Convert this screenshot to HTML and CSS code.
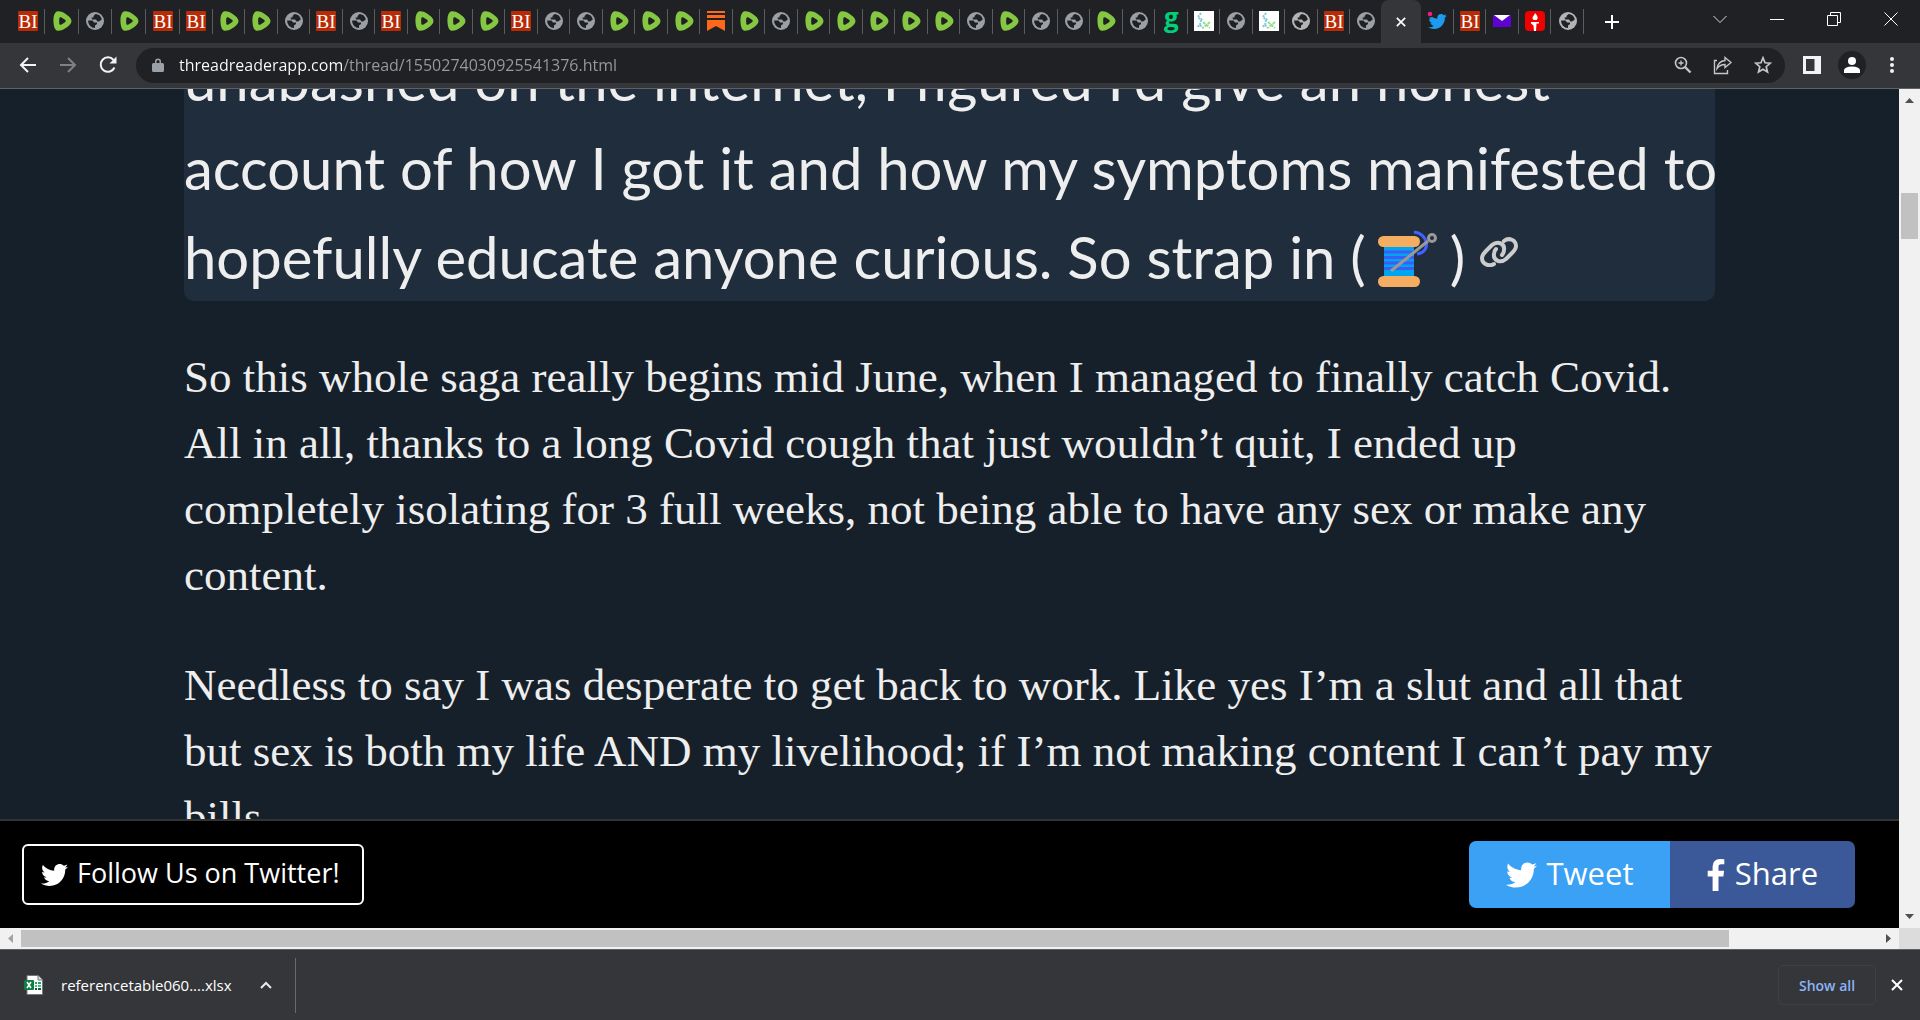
FILE: index.html
```html
<!DOCTYPE html>
<html lang="en">
<head>
<meta charset="utf-8">
<title>Thread Reader</title>
<link rel="stylesheet" href="styles.css">
</head>
<body>
<svg class="defs" aria-hidden="true">
  <symbol id="bi" viewBox="0 0 20 20"><rect width="20" height="20" rx="1" fill="#b92b06"/><text x="10" y="17" text-anchor="middle" font-family="Liberation Serif, serif" font-size="19" fill="#fff">BI</text></symbol>
  <symbol id="ru" viewBox="0 0 20 20"><path d="M3.500 1.500C5-.5 9-.2 13 2.500c4 2.500 6.500 5 6.500 7.500s-2.500 5-6.500 7.500-8 3-9.500 1C1 15.500.5 4.500 3.500 1.500z" fill="#85c742"/><path d="M7.300 7.300c.2-1.200 1.200-1.400 2.200-.8l3.500 2.300c1 .8 1 1.600 0 2.400l-3.500 2.300c-1 .6-2 .4-2.200-.8-.2-1.800-.2-3.600 0-5.400z" fill="#202124"/></symbol>
  <symbol id="gl" viewBox="0 0 18 18"><circle cx="9" cy="9" r="9" fill="currentColor"/><path d="M9.500 2 7.500 4v1.500H5.500l.5 2h4l1.500 2h1.500L15.800 7.500A7 7 0 0 0 9.500 2zM2.100 8.500A7 7 0 0 0 9 16v-2.500l2-1.500V10.500H8L6.500 8.500z" fill="#202124"/></symbol>
  <symbol id="chem" viewBox="0 0 20 20"><rect width="20" height="20" fill="#fff"/><path d="m7 2-3 4 3 3 2-2m-2 2-1 5-3 2m3-2 3 3" fill="none" stroke="#7ccbd8" stroke-width="2" stroke-dasharray="2 1"/><path d="m9 11 7 6m0-6-7 6" stroke="#93dd8b" stroke-width="2" stroke-dasharray="3 1"/></symbol>
  <symbol id="sub" viewBox="0 0 18 20"><path d="M0 0h18v2H0zM0 4h18v3H0zM0 9h18v11l-9-5-9 5z" fill="#ff6719"/></symbol>
  <symbol id="bird" viewBox="0 48 512 416"><path fill="currentColor" d="M459.370 151.716c.325 4.548.325 9.097.325 13.645 0 138.720-105.583 298.558-298.558 298.558-59.452 0-114.680-17.219-161.137-47.106 8.447.974 16.568 1.299 25.340 1.299 49.055 0 94.213-16.568 130.274-44.832-46.132-.975-84.792-31.188-98.112-72.772 6.498.974 12.995 1.624 19.818 1.624 9.421 0 18.843-1.300 27.614-3.573-48.081-9.747-84.143-51.980-84.143-102.985v-1.299c13.969 7.797 30.214 12.670 47.431 13.319-28.264-18.843-46.781-51.005-46.781-87.391 0-19.492 5.197-37.360 14.294-52.954 51.655 63.675 129.300 105.258 216.365 109.807-1.624-7.797-2.599-15.918-2.599-24.040 0-57.828 46.782-104.934 104.934-104.934 30.213 0 57.502 12.670 76.670 33.137 23.715-4.548 46.456-13.320 66.599-25.340-7.798 24.366-24.366 44.833-46.132 57.827 21.117-2.273 41.584-8.122 60.426-16.243-14.292 20.791-32.161 39.308-52.628 54.253z"/></symbol>
  <symbol id="x" viewBox="0 0 12 12"><path d="m1 1 10 10M11 1 1 11" stroke="currentColor" stroke-width="2" fill="none"/></symbol>
</svg>

<header class="browser">
  <nav class="tabs" aria-label="Tabs">
    <div class="group group-first">
      <button class="tab"><svg class="i20"><use href="#bi"/></svg></button>
      <button class="tab"><svg class="i20"><use href="#ru"/></svg></button>
      <button class="tab"><svg class="i18"><use href="#gl"/></svg></button>
      <button class="tab"><svg class="i20"><use href="#ru"/></svg></button>
      <button class="tab"><svg class="i20"><use href="#bi"/></svg></button>
    </div>
    <div class="group group-main">
      <button class="tab"><svg class="i20"><use href="#bi"/></svg></button>
      <button class="tab"><svg class="i20"><use href="#ru"/></svg></button>
      <button class="tab"><svg class="i20"><use href="#ru"/></svg></button>
      <button class="tab"><svg class="i18"><use href="#gl"/></svg></button>
      <button class="tab"><svg class="i20"><use href="#bi"/></svg></button>
      <button class="tab"><svg class="i18"><use href="#gl"/></svg></button>
      <button class="tab"><svg class="i20"><use href="#bi"/></svg></button>
      <button class="tab"><svg class="i20"><use href="#ru"/></svg></button>
      <button class="tab"><svg class="i20"><use href="#ru"/></svg></button>
      <button class="tab"><svg class="i20"><use href="#ru"/></svg></button>
      <button class="tab"><svg class="i20"><use href="#bi"/></svg></button>
      <button class="tab"><svg class="i18"><use href="#gl"/></svg></button>
      <button class="tab"><svg class="i18"><use href="#gl"/></svg></button>
      <button class="tab"><svg class="i20"><use href="#ru"/></svg></button>
      <button class="tab"><svg class="i20"><use href="#ru"/></svg></button>
      <button class="tab"><svg class="i20"><use href="#ru"/></svg></button>
      <button class="tab"><svg class="i20"><use href="#sub"/></svg></button>
      <button class="tab"><svg class="i20"><use href="#ru"/></svg></button>
      <button class="tab"><svg class="i18"><use href="#gl"/></svg></button>
      <button class="tab"><svg class="i20"><use href="#ru"/></svg></button>
      <button class="tab"><svg class="i20"><use href="#ru"/></svg></button>
      <button class="tab"><svg class="i20"><use href="#ru"/></svg></button>
      <button class="tab"><svg class="i20"><use href="#ru"/></svg></button>
      <button class="tab"><svg class="i20"><use href="#ru"/></svg></button>
      <button class="tab"><svg class="i18"><use href="#gl"/></svg></button>
      <button class="tab"><svg class="i20"><use href="#ru"/></svg></button>
      <button class="tab"><svg class="i18"><use href="#gl"/></svg></button>
      <button class="tab"><svg class="i18"><use href="#gl"/></svg></button>
      <button class="tab"><svg class="i20"><use href="#ru"/></svg></button>
      <button class="tab"><svg class="i18"><use href="#gl"/></svg></button>
      <button class="tab"><span class="gab">g</span></button>
      <button class="tab"><svg class="i20"><use href="#chem"/></svg></button>
      <button class="tab"><svg class="i18"><use href="#gl"/></svg></button>
      <button class="tab"><svg class="i20"><use href="#chem"/></svg></button>
      <button class="tab"><svg class="i18 pale"><use href="#gl"/></svg></button>
      <button class="tab"><svg class="i20"><use href="#bi"/></svg></button>
    </div>
    <button class="tab tab-edge"><svg class="i18"><use href="#gl"/></svg></button>
    <button class="tab tab-active" aria-label="Close tab"><svg class="i10"><use href="#x"/></svg></button>
    <div class="group group-last">
      <button class="tab"><svg class="i20" viewBox="0 0 20 20"><svg x="1" y="3" width="19" height="15" class="sky"><use href="#bird"/></svg><circle cx="3" cy="3" r="3.500" fill="#202124"/><circle cx="3" cy="3" r="2.300" fill="#f91880"/></svg></button>
      <button class="tab"><svg class="i20"><use href="#bi"/></svg></button>
      <button class="tab"><svg class="i18" viewBox="0 0 18 18"><path d="M0 3h18v12H0z" fill="#5f01d1"/><path d="M1 3h16l-8 6z" fill="#fff"/></svg></button>
      <button class="tab"><svg class="i20" viewBox="0 0 20 20"><rect width="20" height="20" rx="4" fill="#f20000"/><path d="M10 2c2 2 3 4 2.500 5.500-.5 1-1 1.500-1 1.500h-3s-1-.7-1-2C7.500 5 9.500 4.500 10 2zM6 11h8v1.500h-2.500L11 20H9l-.5-5.500L6 12.500z" fill="#fff"/></svg></button>
      <button class="tab"><svg class="i18 pale"><use href="#gl"/></svg></button>
    </div>
    <button class="newtab" aria-label="New tab"><svg class="i16" viewBox="0 0 16 16"><path d="M8 1v14M1 8h14" stroke="#fff" stroke-width="2"/></svg></button>
    <div class="window-controls">
      <button aria-label="Search tabs"><svg class="i14" viewBox="0 0 14 14"><path d="m.5 4 6.500 6.500L13.500 4" fill="none" stroke="#ddd"/></svg></button>
      <button aria-label="Minimize"><svg class="i14" viewBox="0 0 14 14"><path d="M0 7.500h14" stroke="#fff"/></svg></button>
      <button aria-label="Restore"><svg class="i14" viewBox="0 0 14 14"><path d="M.5 3.500h10v10H.5zM3.500 3V.5h10v10H11" fill="none" stroke="#fff"/></svg></button>
      <button aria-label="Close"><svg class="i14" viewBox="0 0 14 14"><path d="m.5.5 13 13m0-13-13 13" stroke="#fff"/></svg></button>
    </div>
  </nav>

  <div class="toolbar">
    <div class="nav-buttons">
      <button aria-label="Back"><svg class="i18" viewBox="0 0 18 18"><path d="M17 9H2m7-7L2 9l7 7" fill="none" stroke="#f1f3f4" stroke-width="2"/></svg></button>
      <button aria-label="Forward"><svg class="i18" viewBox="0 0 18 18"><path d="M1 9h15M9 2l7 7-7 7" fill="none" stroke="#808185" stroke-width="2"/></svg></button>
      <button aria-label="Reload"><svg class="i18" viewBox="0 0 18 18"><path d="M15.500 11.500A7.200 7.200 0 1 1 14.500 4" fill="none" stroke="#f1f3f4" stroke-width="2"/><path d="M17.500.5v7h-7z" fill="#f1f3f4"/></svg></button>
    </div>
    <form class="omnibox">
      <svg class="i14" viewBox="0 0 12 14"><path d="M1.500 5H3V3.500a3 3 0 0 1 6 0V5h1.500Q12 5 12 6.500v6q0 1.500-1.500 1.500h-9Q0 14 0 12.500v-6Q0 5 1.500 5zm3 0h3V3.500a1.500 1.500 0 0 0-3 0z" fill="#9aa0a6"/></svg>
      <input class="url" type="text" aria-label="Address" value="threadreaderapp.com/thread/1550274030925541376.html">
      <button type="button" aria-label="Zoom"><svg class="i18" viewBox="0 0 18 18"><circle cx="7" cy="7" r="5.500" fill="none" stroke="#c4c7c5" stroke-width="1.600"/><path d="M11 11l5.500 5.500" stroke="#c4c7c5" stroke-width="2.400"/><path d="M7 4.500v5M4.500 7h5" stroke="#c4c7c5" stroke-width="1.300"/></svg></button>
      <button type="button" aria-label="Share"><svg class="i20" viewBox="0 0 20 20"><path d="M4 5.500H1.500v13h13V15M12 2.500l6 5-6 5v-3c-4 0-6 1.500-8 4 .7-4.500 3.500-7.500 8-8z" fill="none" stroke="#c4c7c5" stroke-width="1.400"/></svg></button>
      <button type="button" aria-label="Bookmark"><svg class="i18" viewBox="0 0 18 18"><path d="m9 1.800 2 5 5.300.4-4.100 3.500 1.300 5.300L9 13.200 4.500 16l1.300-5.300-4.100-3.500L7 6.800z" fill="none" stroke="#c4c7c5" stroke-width="1.700"/></svg></button>
    </form>
    <div class="tool-buttons">
      <button aria-label="Side panel"><svg class="i18" viewBox="0 0 18 18"><path d="M0 0h18v18H0zM3 3v12h8.500V3z" fill="#f1f3f4" fill-rule="evenodd"/></svg></button>
      <button class="profile" aria-label="Profile"><svg class="i16" viewBox="0 0 16 16"><circle cx="8" cy="4" r="4" fill="#fff"/><path d="M0 16v-3q1-3.500 8-3.500t8 3.500v3z" fill="#fff"/></svg></button>
      <button aria-label="Menu"><svg class="i18" viewBox="0 0 18 18"><g fill="#f1f3f4"><circle cx="9" cy="3" r="2"/><circle cx="9" cy="9" r="2"/><circle cx="9" cy="15" r="2"/></g></svg></button>
    </div>
  </div>
</header>

<div class="viewport">
  <div class="page">
    <main class="thread">
      <article class="scrolled">
        <p class="lead">unabashed on the internet, I figured I’d give an honest<br>account of how I got it and how my symptoms manifested to<br>hopefully educate anyone curious. So strap in (<svg class="thread-emoji" viewBox="0 0 60 58" role="img" aria-label="thread"><path d="M6 14h30v34H6z" fill="#00a5f0"/><path d="M6 22h30M6 27.500h30M6 33h30M6 38.500h30" stroke="#3c5cf5" stroke-width="3"/><rect y="6" width="42" height="11" rx="5.500" fill="#f5ae61"/><rect y="46" width="42" height="11" rx="5.500" fill="#f5ae61"/><path d="M36 2c14 1 18 20 3 22" fill="none" stroke="#4162ff" stroke-width="3"/><path d="M13 41 50 11" stroke="#999" stroke-width="3"/><circle cx="54" cy="8" r="3.500" fill="none" stroke="#999" stroke-width="3"/></svg>) <a class="permalink" href="#" aria-label="Permalink"><svg viewBox="0 0 38 30"><g fill="none" stroke="#ccc" stroke-width="4" stroke-linecap="round"><path d="M14 27c-5 3-12 0-12-6 0-3 2-5 4-7l6-6c6-5 13-1 12 5 0 3-1 4-2 5"/><path d="M24 4c5-4 12-1 12 5 0 3-2 5-4 7l-6 6c-6 5-13 1-12-5 0-3 1-4 2-5"/></g></svg></a></p>
        <p class="body">So this whole saga really begins mid June, when I managed to finally catch Covid.<br>All in all, thanks to a long Covid cough that just wouldn’t quit, I ended up<br>completely isolating for 3 full weeks, not being able to have any sex or make any<br>content.</p>
        <p class="body">Needless to say I was desperate to get back to work. Like yes I’m a slut and all that<br>but sex is both my life AND my livelihood; if I’m not making content I can’t pay my<br>bills.</p>
      </article>
    </main>
    <footer class="actions">
      <a class="follow" href="#"><svg class="bird-small"><use href="#bird"/></svg><span class="label">Follow Us on Twitter!</span></a>
      <div class="share-group">
        <a class="share tweet" href="#"><svg class="bird-big"><use href="#bird"/></svg><span class="label">Tweet</span></a>
        <a class="share facebook" href="#"><svg class="fb" viewBox="479 0 864 1664"><path fill="#fff" d="M1343 12v264h-157q-86 0-116 36t-30 108v189h293l-39 296h-254v759h-306v-759h-255v-296h255v-218q0-186 104-288.500t277-102.500q147 0 228 12z"/></svg><span class="label">Share</span></a>
      </div>
    </footer>
  </div>
  <div class="vscroll">
    <svg class="arrow" viewBox="0 0 9 5"><path d="M0 5 4.500 0 9 5z" fill="#505050"/></svg>
    <div class="vthumb"></div>
    <svg class="arrow arrow-end" viewBox="0 0 9 5"><path d="M0 0h9L4.500 5z" fill="#505050"/></svg>
  </div>
</div>
<div class="hscroll">
  <div class="htrack">
    <svg class="harrow" viewBox="0 0 5 9"><path d="M5 0v9L0 4.500z" fill="#a3a3a3"/></svg>
    <div class="hrail"><div class="hthumb"></div></div>
    <svg class="harrow" viewBox="0 0 5 9"><path d="M0 0v9l5-4.500z" fill="#505050"/></svg>
  </div>
</div>

<footer class="downloads">
  <button class="file">
    <svg class="i20" viewBox="0 0 20 20"><path d="M3 .5h11l4.500 4.500v14.500H3z" fill="#fff" stroke="#777"/><path d="M14 .5V5h4.500" fill="#ddd" stroke="#777"/><path d="M11 7h2v2h-2zm3 0h3v2h-3z" fill="#21a366"/><path d="M11 10h2v2h-2zm3 0h3v2h-3z" fill="#33c481"/><path d="M11 13h2v2h-2zm3 0h3v2h-3z" fill="#185c37"/><rect y="5" width="10" height="10" rx="1" fill="#107c41"/><path d="m3 7 4 6m0-6-4 6" stroke="#fff" stroke-width="1.500"/></svg>
    <span>referencetable060....xlsx</span>
  </button>
  <button class="more" aria-label="File options"><svg class="i12" viewBox="0 0 12 12"><path d="m1 9 5-5 5 5" fill="none" stroke="#e8eaed" stroke-width="2"/></svg></button>
  <button class="show-all">Show all</button>
  <button class="dismiss" aria-label="Close"><svg class="i12"><use href="#x"/></svg></button>
</footer>
</body>
</html>
```
FILE: styles.css
```css
* { box-sizing: border-box; }
html, body { height: 100%; }
body {
  margin: 0;
  display: flex;
  flex-direction: column;
  overflow: hidden;
  background: #35363a;
  font-family: "Open Sans", "Noto Sans", sans-serif;
}
button {
  margin: 0;
  padding: 0;
  border: 0;
  background: none;
  color: #fff;
  font: inherit;
  display: flex;
  align-items: center;
  justify-content: center;
}
svg { flex: none; }
.defs { position: absolute; width: 0; height: 0; }
.i10 { width: 10px; height: 10px; }
.i12 { width: 12px; height: 12px; }
.i14 { width: 14px; height: 14px; }
.i16 { width: 16px; height: 16px; }
.i18 { width: 18px; height: 18px; color: #9aa0a6; }
.i20 { width: 20px; height: 20px; }
.i18.pale { color: #b4b4b4; }
.i10, .i12 { color: #fff; }

/* Tab strip */
.browser { flex: none; border-bottom: 1px solid #606164; }
.tabs { display: flex; height: 43px; padding-left: 11px; background: #202124; }
.group { display: flex; min-width: 0; }
.group-first { flex: 0 1 169px; }
.group-main { flex: 0 1 1170px; }
.group-last { flex: 0 1 163px; }
.tab { position: relative; flex: 1 1 0; min-width: 0; height: 42px; }
.group .tab::after {
  content: "";
  position: absolute;
  right: 0;
  top: 9px;
  width: 1px;
  height: 25px;
  background: #5b5c60;
}
.tab-edge { flex: 0 0 31px; }
.tab-active { flex: 0 0 40px; height: 43px; border-radius: 8px 8px 0 0; background: #35363a; }
.sky { color: #1d9bf0; }
.gab {
  color: #00d178;
  font: bold 26px/20px "Open Sans", sans-serif;
  padding-bottom: 8px;
}
.newtab { width: 55px; }
.window-controls { display: flex; margin-left: auto; height: 37px; padding-right: 1px; }
.window-controls button { width: 57px; }

/* Toolbar */
.toolbar { display: flex; align-items: center; height: 45px; padding-bottom: 1px; background: #35363a; }
.nav-buttons { display: flex; padding: 0 8px; }
.nav-buttons button { width: 40px; height: 36px; }
.omnibox {
  flex: 1;
  display: flex;
  align-items: center;
  height: 35px;
  padding: 0 2px 0 15px;
  border-radius: 18px;
  background: #202124;
}
.omnibox button { width: 40px; height: 35px; }
.url {
  flex: 1;
  min-width: 0;
  height: 28px;
  margin-left: 14px;
  padding: 0;
  border: 0;
  outline: 0;
  font: 16px/28px "Open Sans", "Noto Sans", sans-serif;
  color: transparent;
  background: linear-gradient(90deg, #fff 163px, #9a9b9e 163px);
  -webkit-background-clip: text;
  background-clip: text;
}
.tool-buttons { display: flex; align-items: center; gap: 12px; padding: 0 14px 0 13px; }
.tool-buttons button { width: 28px; height: 28px; }
.profile { border-radius: 50%; background: #202124; }

/* Page */
.viewport { flex: 1; display: flex; min-height: 0; }
.page { flex: 1; min-width: 0; display: flex; flex-direction: column; background: #16202a; }
.thread { flex: 1; min-height: 0; overflow: hidden; padding: 0 184px; }
.scrolled { margin-top: -55px; white-space: nowrap; color: #eee; }
.lead {
  margin: 0 0 43px;
  border-radius: 10px;
  background: #1f2d3d;
  font: 58px/89px Lato, sans-serif;
}
.thread-emoji { width: 60px; height: 58px; margin: 0 12px; vertical-align: -9px; }
.permalink svg { width: 38px; height: 30px; vertical-align: 12px; }
.body { margin: 0 0 44px; font: 45px/66px "Liberation Serif", serif; }

/* Action bar */
.actions {
  flex: none;
  display: flex;
  align-items: center;
  justify-content: space-between;
  height: 109px;
  padding: 0 44px 0 22px;
  border-top: 2px solid #333;
  background: #000;
}
.actions a { display: flex; align-items: center; color: #fff; text-decoration: none; }
.label { padding-bottom: 4px; }
.follow {
  gap: 9px;
  height: 61px;
  min-width: 342px;
  padding: 0 17px;
  border: 2px solid #fff;
  border-radius: 6px;
  font-size: 27px;
}
.bird-small { width: 27px; height: 22px; }
.share-group { display: flex; border-radius: 7px; overflow: hidden; }
.share { justify-content: center; gap: 10px; height: 67px; font-size: 31px; }
.tweet { width: 201px; background: #3aa1f4; }
.facebook { width: 185px; background: #3b5998; }
.bird-big { width: 31px; height: 26px; }
.fb { width: 18px; height: 32px; }

/* Scroll bars */
.vscroll {
  display: flex;
  flex-direction: column;
  align-items: center;
  width: 21px;
  padding: 9px 0;
  background: #f1f1f1;
}
.arrow { width: 9px; height: 5px; }
.arrow-end { margin-top: auto; }
.vthumb { width: 17px; height: 46px; margin-top: 90px; background: #c1c1c1; }
.hscroll { flex: none; height: 21px; padding-right: 21px; background: #dcdcdc; }
.htrack { display: flex; align-items: center; height: 21px; padding: 0 8px; background: #f1f1f1; }
.harrow { width: 5px; height: 9px; }
.hrail { flex: 1; padding: 0 8px; }
.hthumb { width: 92%; height: 17px; background: #c1c1c1; }

/* Download shelf */
.downloads {
  flex: none;
  display: flex;
  align-items: center;
  height: 71px;
  padding-right: 17px;
  border-top: 1px solid #5f6064;
  background: #35363a;
  font-size: 15px;
}
.file { gap: 17px; padding-left: 24px; }
.more { width: 64px; height: 55px; padding-left: 6px; margin-right: auto; border-right: 1px solid #6a6b6e; }
.show-all {
  width: 98px;
  height: 40px;
  margin-right: 15px;
  border: 1px solid #3f4044;
  border-radius: 5px;
  color: #8ab4f8;
  font-size: 14px;
  font-weight: 600;
}
```
